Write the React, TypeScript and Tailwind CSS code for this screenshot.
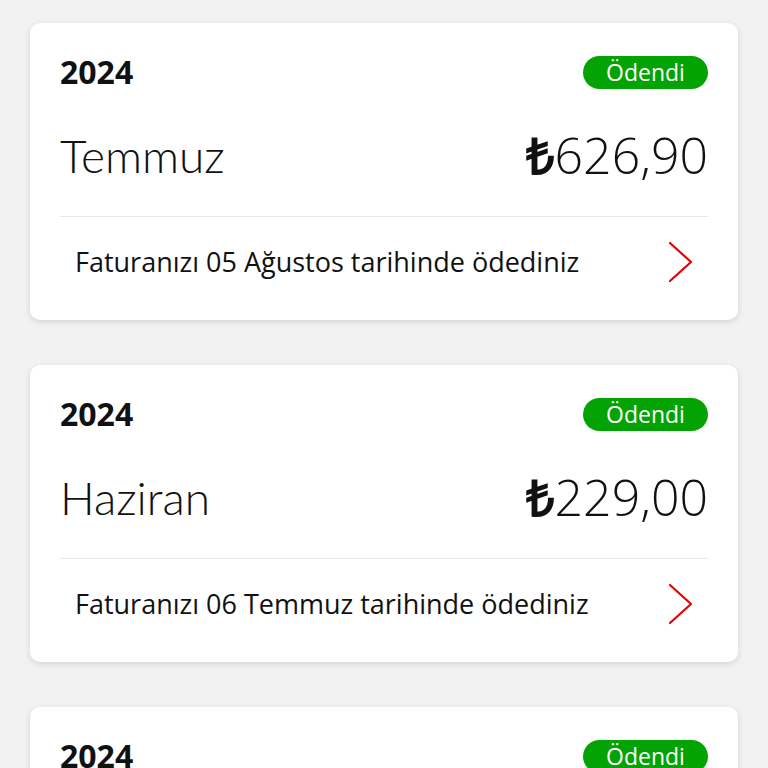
const bills = [
  { year: '2024', month: 'Temmuz', amount: '626,90', note: 'Faturanızı 05 Ağustos tarihinde ödediniz' },
  { year: '2024', month: 'Haziran', amount: '229,00', note: 'Faturanızı 06 Temmuz tarihinde ödediniz' },
  { year: '2024', month: 'Mayıs', amount: '229,00', note: 'Faturanızı 05 Haziran tarihinde ödediniz' },
]

const Chevron = () => (
  <svg width="26" height="42" viewBox="0 0 26 42" fill="none">
    <path d="M2 2 L23 21 L2 40" stroke="#e60000" strokeWidth="2.2" strokeLinecap="round" strokeLinejoin="round" />
  </svg>
)

const BillCard = ({ year, month, amount, note }: typeof bills[number]) => (
  <div className="bg-white rounded-[10px] shadow-[0_2px_6px_rgba(0,0,0,0.13)] px-[30px] pt-[32px]">
    <div className="flex items-center justify-between h-[34px]">
      <span className="text-[32px] font-bold text-[#111]">{year}</span>
      <span className="bg-[#03a303] text-white text-[23px] rounded-full w-[125px] h-[33px] flex items-center justify-center leading-none">
        Ödendi
      </span>
    </div>
    <div className="flex items-center justify-between h-[60px] mt-[36px]">
      <span className="text-[46px] font-light text-[#111] font-['Lato',sans-serif]">{month}</span>
      <span className="text-[50px] font-light text-[#111] flex items-center">
        <span className="font-bold">₺</span>
        {amount}
      </span>
    </div>
    <div className="h-px bg-[#e6e6e6] mt-[31px]" />
    <div className="flex items-center justify-between pl-[15px] pr-[14px] h-[103px] pb-[13px]">
      <span className="text-[27px] text-[#111]">{note}</span>
      <Chevron />
    </div>
  </div>
)

export default function App() {
  return (
    <div className="h-screen overflow-hidden bg-[#f2f2f2] px-[30px] pt-[23px]" style={{ fontFamily: '"Open Sans", sans-serif' }}>
      <div className="flex flex-col gap-[45px]">
        {bills.map((b, i) => (
          <BillCard key={i} {...b} />
        ))}
      </div>
    </div>
  )
}
